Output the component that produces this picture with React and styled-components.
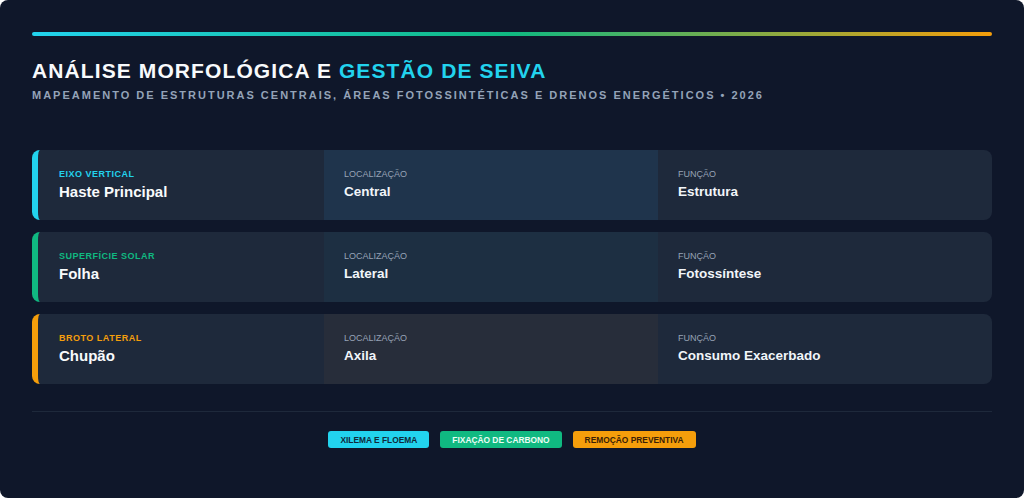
import React from 'react';
import styled, { createGlobalStyle } from 'styled-components';

const GlobalStyle = createGlobalStyle`
    html, body {
        margin: 0;
        padding: 0;
        background: #ffffff;
    }
    body {
        font-family: "Liberation Sans", Arial, sans-serif;
    }
`;

const Page = styled.div`
    width: 1024px;
    height: 498px;
    box-sizing: border-box;
    padding: 32px;
    background: #0f172a;
    border-radius: 8px;
    display: flex;
    flex-direction: column;
`;

const AccentBar = styled.div`
    height: 4px;
    border-radius: 2px;
    background: linear-gradient(90deg, #22d3ee 0%, #10b981 50%, #f59e0b 100%);
`;

const Header = styled.header`
    margin-top: 23px;
    display: flex;
    flex-direction: column;
    gap: 5px;
`;

const Title = styled.h1`
    margin: 0;
    font-size: 21px;
    line-height: 24px;
    font-weight: 700;
    letter-spacing: 1.1px;
    color: #f8fafc;
    text-transform: uppercase;
    span {
        color: #22d3ee;
    }
`;

const Subtitle = styled.p`
    margin: 0;
    font-size: 11px;
    line-height: 14px;
    font-weight: 700;
    letter-spacing: 2px;
    color: #94a3b8;
    text-transform: uppercase;
`;

const List = styled.div`
    margin-top: 48px;
    display: flex;
    flex-direction: column;
    gap: 12px;
`;

const Row = styled.div`
    display: grid;
    grid-template-columns: 286px 1fr 1fr;
    height: 70px;
    box-sizing: border-box;
    border-left: 6px solid ${p => p.$accent};
    border-radius: 8px;
    background: #1e293b;
    overflow: hidden;
`;

const Cell = styled.div`
    display: flex;
    flex-direction: column;
    justify-content: center;
    gap: 3px;
    padding: 0 20px 0 ${p => (p.$first ? 21 : 20)}px;
    background: ${p => p.$tint || 'transparent'};
`;

const Tag = styled.span`
    font-size: 9px;
    line-height: 11px;
    font-weight: 700;
    letter-spacing: 0.5px;
    text-transform: uppercase;
    color: ${p => p.$color};
`;

const Caption = styled.span`
    font-size: 9px;
    line-height: 11px;
    font-weight: 400;
    text-transform: uppercase;
    color: #97a3b6;
`;

const Name = styled.span`
    font-size: 15px;
    line-height: 18px;
    font-weight: 700;
    color: #f8fafc;
`;

const Value = styled.span`
    font-size: 13.5px;
    line-height: 18px;
    font-weight: 700;
    color: #f1f5f9;
`;

const Divider = styled.hr`
    margin: 27px 0 0;
    border: none;
    height: 1px;
    background: #1e293b;
`;

const Badges = styled.div`
    margin-top: 19px;
    display: flex;
    justify-content: center;
    gap: 11px;
`;

const Badge = styled.span`
    display: inline-flex;
    align-items: center;
    height: 17px;
    padding: 0 12px;
    border-radius: 3px;
    font-size: 8.4px;
    font-weight: 700;
    text-transform: uppercase;
    background: ${p => p.$bg};
    color: ${p => p.$fg};
`;

const parts = [
    {
        tag: 'Eixo Vertical',
        name: 'Haste Principal',
        location: 'Central',
        role: 'Estrutura',
        accent: '#22d3ee',
        tint: '#1f344c'
    },
    {
        tag: 'Superfície Solar',
        name: 'Folha',
        location: 'Lateral',
        role: 'Fotossíntese',
        accent: '#10b981',
        tint: '#1d2f42'
    },
    {
        tag: 'Broto Lateral',
        name: 'Chupão',
        location: 'Axila',
        role: 'Consumo Exacerbado',
        accent: '#f59e0b',
        tint: '#272d3a'
    }
];

const badges = [
    { label: 'Xilema e Floema', bg: '#22d3ee', fg: '#0f2a3a' },
    { label: 'Fixação de Carbono', bg: '#10b981', fg: '#ecfdf5' },
    { label: 'Remoção Preventiva', bg: '#f59e0b', fg: '#3b1f06' }
];

export default function App() {
    return (
        <Page>
            <GlobalStyle />
            <AccentBar />
            <Header>
                <Title>
                    Análise Morfológica e <span>Gestão de Seiva</span>
                </Title>
                <Subtitle>Mapeamento de estruturas centrais, áreas fotossintéticas e drenos energéticos • 2026</Subtitle>
            </Header>
            <List>
                {parts.map(part => (
                    <Row key={part.name} $accent={part.accent}>
                        <Cell $first>
                            <Tag $color={part.accent}>{part.tag}</Tag>
                            <Name>{part.name}</Name>
                        </Cell>
                        <Cell $tint={part.tint}>
                            <Caption>Localização</Caption>
                            <Value>{part.location}</Value>
                        </Cell>
                        <Cell>
                            <Caption>Função</Caption>
                            <Value>{part.role}</Value>
                        </Cell>
                    </Row>
                ))}
            </List>
            <Divider />
            <Badges>
                {badges.map(b => (
                    <Badge key={b.label} $bg={b.bg} $fg={b.fg}>
                        {b.label}
                    </Badge>
                ))}
            </Badges>
        </Page>
    );
}
